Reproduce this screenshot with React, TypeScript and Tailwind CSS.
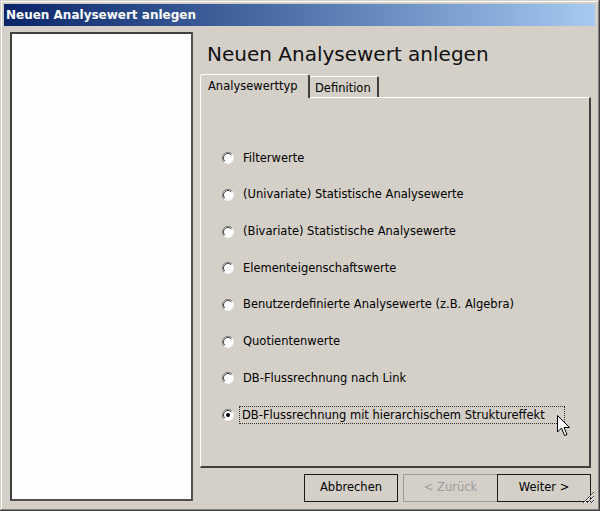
import { useState } from "react";

const options = [
  "Filterwerte",
  "(Univariate) Statistische Analysewerte",
  "(Bivariate) Statistische Analysewerte",
  "Elementeigenschaftswerte",
  "Benutzerdefinierte Analysewerte (z.B. Algebra)",
  "Quotientenwerte",
  "DB-Flussrechnung nach Link",
  "DB-Flussrechnung mit hierarchischem Struktureffekt",
];

function Radio({ checked }: { checked: boolean }) {
  return (
    <svg width="12" height="12" viewBox="0 0 12 12" className="shrink-0">
      <circle cx="6" cy="6" r="5.5" fill="#fff" />
      <path d="M10 2 A5.5 5.5 0 0 0 2 10" fill="none" stroke="#808080" strokeWidth="1" />
      <path d="M9.2 2.8 A4.5 4.5 0 0 0 2.8 9.2" fill="none" stroke="#404040" strokeWidth="1" />
      <path d="M2 10 A5.5 5.5 0 0 0 10 2" fill="none" stroke="#eeeeee" strokeWidth="1" />
      {checked && <circle cx="6" cy="6" r="2" fill="#000" />}
    </svg>
  );
}

export default function App() {
  const [selected, setSelected] = useState(7);

  return (
    <div className="relative w-[600px] h-[511px] bg-[#d4d0c8] p-[4px] flex flex-col font-['DejaVu_Sans',sans-serif] text-black shadow-[inset_-1px_-1px_#404040,inset_1px_1px_#d4d0c8,inset_-2px_-2px_#808080,inset_2px_2px_#ffffff]">
      {/* title bar */}
      <div className="h-[22px] w-[591px] pl-[2px] flex items-center bg-gradient-to-r from-[#0a246a] to-[#a6caf0]">
        <span className="text-white font-bold text-[12px]">Neuen Analysewert anlegen</span>
      </div>

      <div className="flex pt-[6px] pl-[6px]">
        {/* left list */}
        <div className="w-[183px] h-[469px] bg-[#fdfefd] border-2 border-t-[#404040] border-l-[#404040] border-b-[#505050] border-r-[#505050]" />

        <div className="ml-[7px] w-[391px] flex flex-col">
          <h1 className="mt-[10px] pl-[7px] text-[20px] leading-[24px] text-[#111]">Neuen Analysewert anlegen</h1>

          {/* tabs */}
          <div className="mt-[7px] h-[24px] flex items-end text-[11.5px]">
            <div className="h-[24px] w-[110px] bg-[#d4d0c8] rounded-t-[3px] border-l border-t border-white border-r-2 border-r-[#404040] pl-[7px] pt-[3px] relative z-10 -mb-[1px]">
              Analysewerttyp
            </div>
            <div className="h-[21px] w-[69px] bg-[#d4d0c8] rounded-t-[2px] border-t border-white border-r-2 border-r-[#404040] pl-[5px] pt-[3px]">
              Definition
            </div>
          </div>

          {/* tab panel */}
          <div className="h-[371px] border-t border-l border-white border-r-2 border-b-2 border-r-[#404040] border-b-[#404040] pt-[42px] text-[11.5px]">
            {options.map((o, i) => (
              <div
                key={o}
                className="h-[36.7px] flex items-center pl-[21px] gap-[5px] cursor-default"
                onClick={() => setSelected(i)}
              >
                <Radio checked={selected === i} />
                <span
                  className={
                    selected === i
                      ? "w-[326px] h-[18px] flex items-center pl-[2px] border border-dotted border-[#333]"
                      : "h-[18px] flex items-center pl-[3px] border border-transparent"
                  }
                >
                  {o}
                </span>
              </div>
            ))}
          </div>

          {/* buttons */}
          <div className="mt-[6px] flex justify-end text-[11.5px]">
            <button className="w-[94px] h-[28px] border border-[#1a1a1a] bg-[#d4d0c8]">Abbrechen</button>
            <button className="ml-[5px] w-[94px] h-[28px] border border-[#9a9a9a] border-r-0 bg-[#d4d0c8] text-[#9a9a9a]">&lt; Zurück</button>
            <button className="w-[94px] h-[28px] border border-[#1a1a1a] bg-[#d4d0c8]">Weiter &gt;</button>
          </div>
        </div>
      </div>

      {/* size grip */}
      <svg className="absolute left-[582px] top-[491px]" width="13" height="13" viewBox="0 0 13 13">
        <path d="M12 1 L1 12 M12 5 L5 12 M12 9 L9 12" stroke="#404040" strokeWidth="1" />
        <path d="M12 2 L2 12 M12 6 L6 12 M12 10 L10 12" stroke="#ffffff" strokeWidth="1" />
      </svg>

      {/* mouse cursor */}
      <svg className="absolute left-[557px] top-[415px]" width="14" height="22" viewBox="0 0 14 22">
        <path d="M0.5 0.5 L0.5 17 L4.5 13 L7.5 20.5 L10 19.5 L7 12.5 L12.5 12.5 Z" fill="#fff" stroke="#000" strokeWidth="1" strokeLinejoin="miter" />
      </svg>
    </div>
  );
}
